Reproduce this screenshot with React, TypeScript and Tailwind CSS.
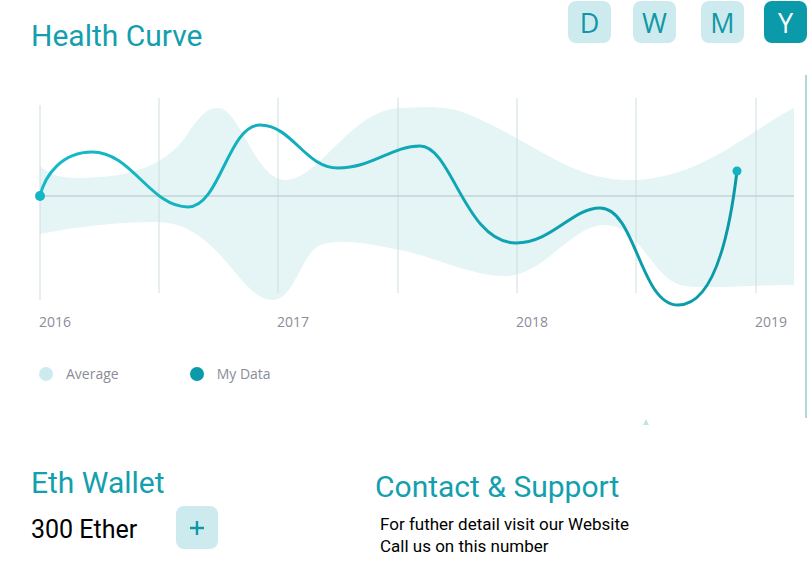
import React from 'react'

const teal = '#139fae'

const years = [
  { x: 40, label: '2016' },
  { x: 278, label: '2017' },
  { x: 517, label: '2018' },
  { x: 756, label: '2019' },
]

const grid = [40, 159, 278, 398, 517, 636, 756]

const bandPath =
  'M40,166 C50,175 60,178 80,178 C130,178 170,165 190,130 C205,110 210,108 218,108 C240,108 255,180 285,180 C320,180 350,110 400,108 C440,106 455,108 470,115 C540,145 570,180 630,180 C700,180 750,130 794,108 ' +
  'L794,285 C740,285 700,290 680,285 C650,275 640,225 605,225 C570,225 545,276 505,276 C470,276 430,255 400,250 C370,244 340,238 320,245 C300,255 295,300 272,300 C240,300 220,225 160,222 C110,222 70,228 40,234 Z'

const linePath =
  'M40,196 C45,175 62,152 92,152 C132,152 150,207 188,207 C220,207 228,125 260,125 C292,125 305,168 338,168 C372,168 392,146 420,146 C452,146 465,243 516,243 C552,243 572,208 600,208 C636,208 640,305 678,305 C715,305 730,230 737,171'

function Chart() {
  return (
    <svg width="805" height="270" viewBox="0 75 805 270" className="block">
      <defs>
        <linearGradient id="lineGrad" x1="0" x2="1" y1="0" y2="0">
          <stop offset="0%" stopColor="#17b9c8" />
          <stop offset="100%" stopColor="#0a99a7" />
        </linearGradient>
      </defs>
      <path d={bandPath} fill="#e5f4f5" />
      {grid.map((x, i) => (
        <line key={x} x1={x} x2={x} y1={i === 0 ? 105 : 98} y2={i === 0 ? 300 : 293} stroke="#c9d9da" strokeOpacity="0.6" strokeWidth="1.5" />
      ))}
      <line x1="40" x2="794" y1="196" y2="196" stroke="#c3d5d6" strokeWidth="1.5" />
      <path d={linePath} fill="none" stroke="url(#lineGrad)" strokeWidth="3" strokeLinecap="round" />
      <circle cx="40" cy="196" r="5" fill="#13b6c5" />
      <circle cx="737" cy="171" r="4.5" fill="#12b2c1" />
      {years.map((y) => (
        <text key={y.label} x={y.x - 1} y="327" fontSize="14" fill="#8c8c98" fontFamily="'Open Sans', sans-serif">
          {y.label}
        </text>
      ))}
    </svg>
  )
}

const ranges = ['D', 'W', 'M', 'Y']
const rangeMargins = ['', 'ml-[22px]', 'ml-[25px]', 'ml-[20px]']

export default function App() {
  return (
    <div className="w-[810px] h-[575px] overflow-hidden bg-white" style={{ fontFamily: 'Roboto, sans-serif' }}>
      {/* Header */}
      <div className="flex h-[75px] items-start justify-between">
        <h1 className="ml-[31px] mt-[18px] text-[30px] leading-[36px] font-normal" style={{ color: teal }}>
          Health Curve
        </h1>
        <div className="mr-[3px] mt-px flex">
          {ranges.map((r, i) => (
            <button
              key={r}
              className={`${rangeMargins[i]} flex h-[42px] w-[43px] items-center justify-center rounded-[8px] text-[27px] leading-none ${
                r === 'Y' ? 'bg-[#0b9aa9] text-white' : 'bg-[#cdebee] text-[#1097a6]'
              }`}
              style={{ fontFamily: "'Open Sans', sans-serif" }}
            >
              {r}
            </button>
          ))}
        </div>
      </div>

      {/* Chart */}
      <div className="h-[343px] w-[807px] border-r-2 border-[#b3d6da]">
        <Chart />
        <div className="mt-[18px] flex items-center text-[14px] text-[#8c8c98]" style={{ fontFamily: "'Open Sans', sans-serif" }}>
          <span className="ml-[39px] h-[14px] w-[14px] rounded-full bg-[#cdebee]" />
          <span className="ml-[13px]">Average</span>
          <span className="ml-[71px] h-[14px] w-[14px] rounded-full bg-[#0b9aa8]" />
          <span className="ml-[13px]">My Data</span>
        </div>
        <div className="ml-[643px] mt-[35px] h-0 w-0 border-x-[3px] border-b-[6px] border-x-transparent border-b-[#bfe6e3]" />
      </div>

      {/* Bottom */}
      <div className="flex">
        <div className="w-[375px] pl-[31px]">
          <h2 className="mt-[47px] text-[30px] leading-[36px] font-normal" style={{ color: teal }}>
            Eth Wallet
          </h2>
          <div className="mt-[5px] flex items-center">
            <span className="w-[145px] pt-[5px] text-[25px] leading-[30px] text-black">300 Ether</span>
            <button className="flex h-[43px] w-[42px] items-center justify-center rounded-[8px] bg-[#cdebee] text-[#1097a6]">
              <svg width="16" height="16" viewBox="0 0 16 16">
                <path d="M8 1v14M1 8h14" stroke="currentColor" strokeWidth="2.4" />
              </svg>
            </button>
          </div>
        </div>
        <div>
          <h2 className="mt-[51px] text-[30px] leading-[36px] font-normal" style={{ color: teal }}>
            Contact &amp; Support
          </h2>
          <div className="mt-[8px] pl-[5px] text-[17px] leading-[22px] text-black">
            <p>For futher detail visit our Website</p>
            <p>Call us on this number</p>
          </div>
        </div>
      </div>
    </div>
  )
}
